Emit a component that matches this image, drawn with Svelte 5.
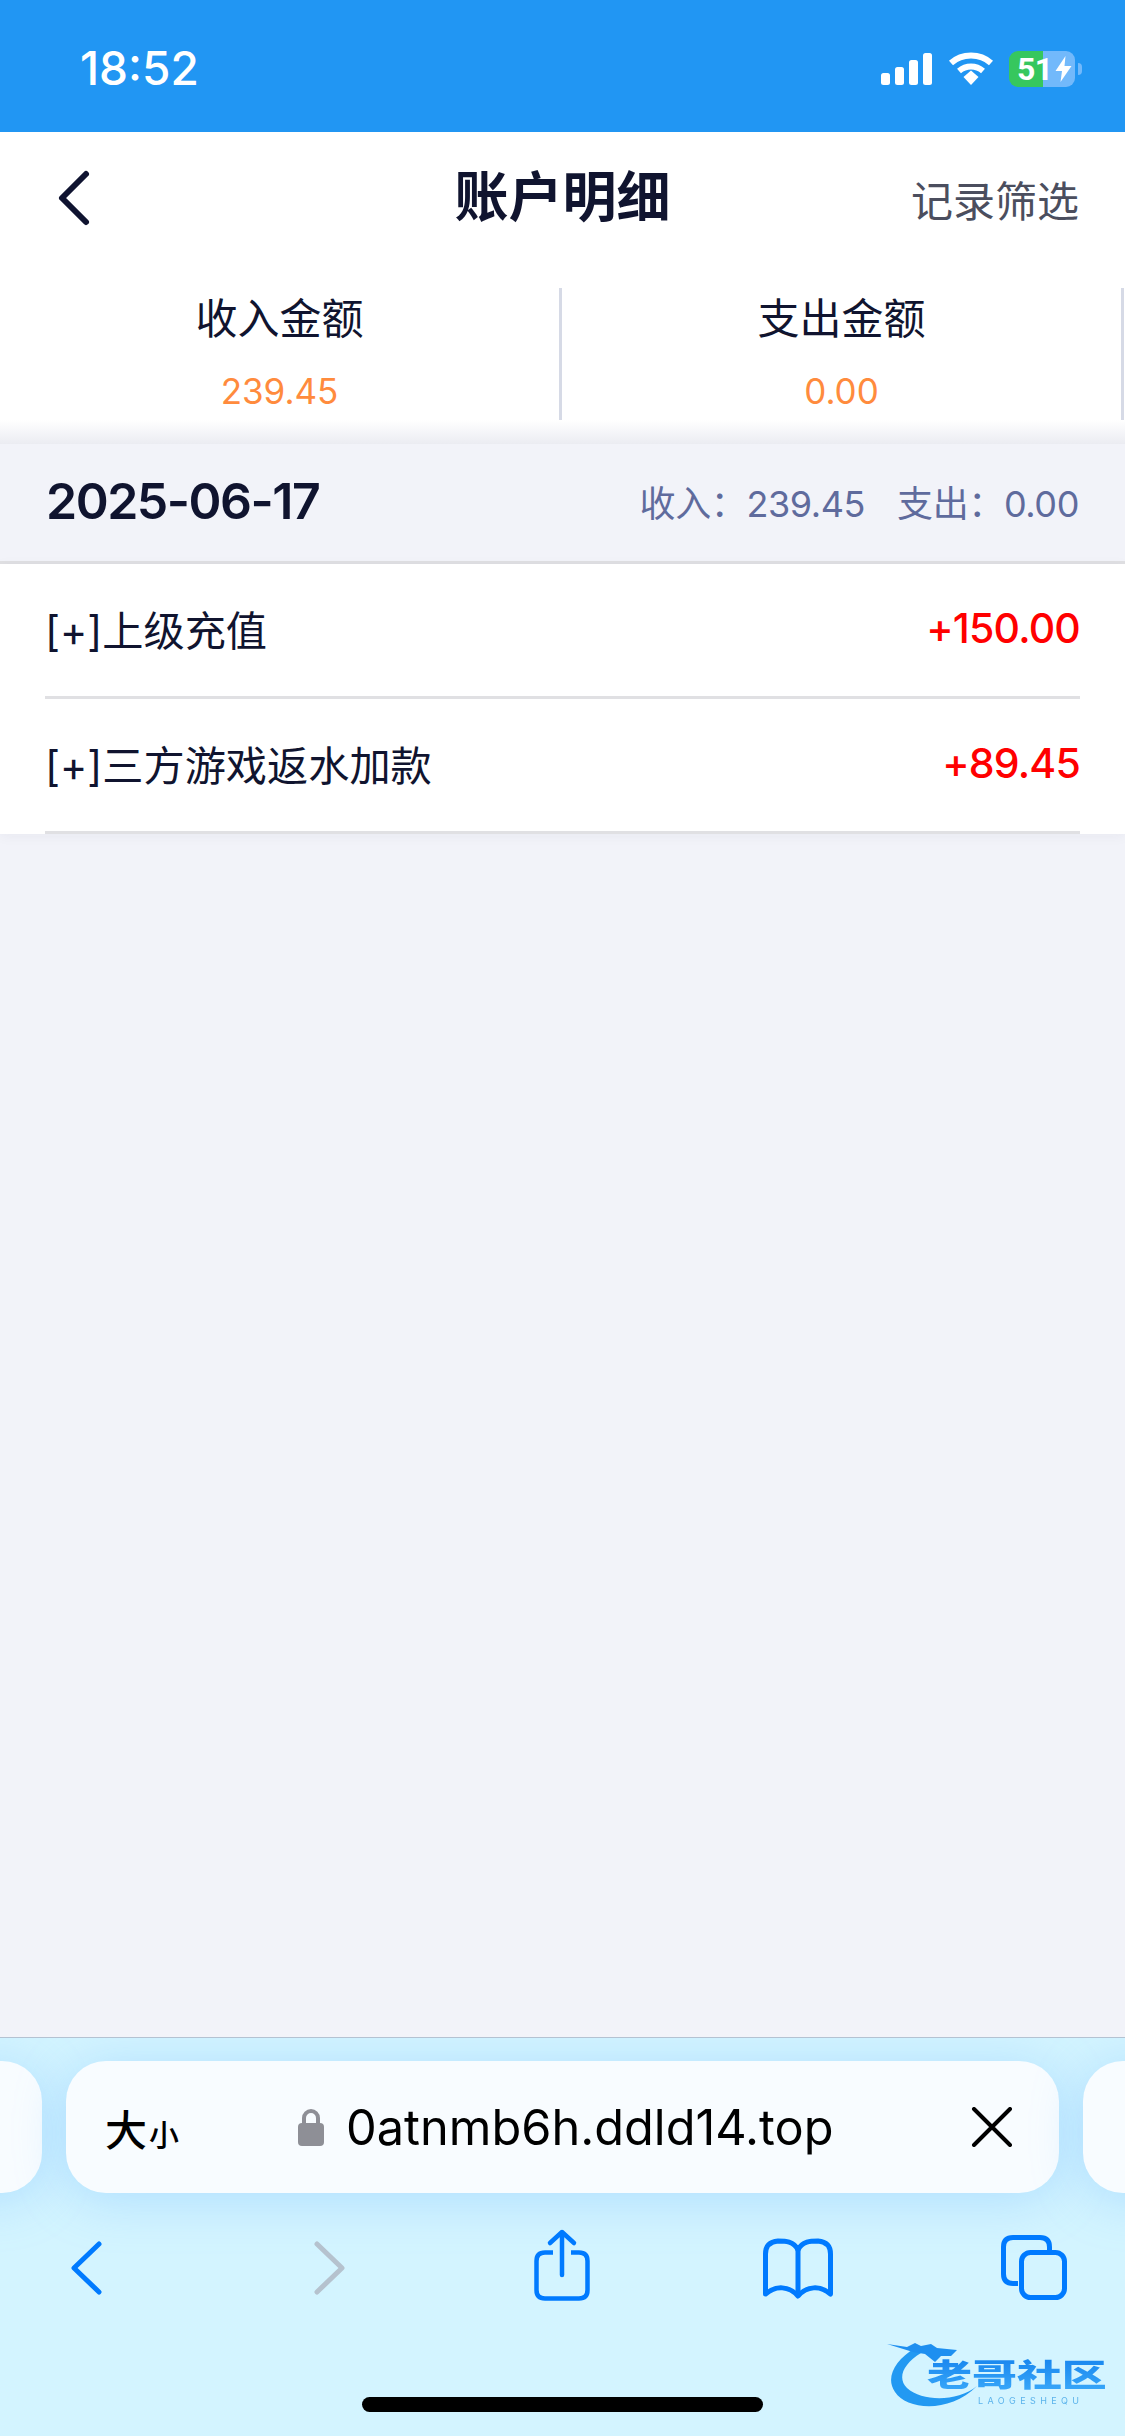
<script>
  const summary = [
    { label: "收入金额", value: "239.45" },
    { label: "支出金额", value: "0.00" },
  ];
  const records = [
    { name: "[+]上级充值", amount: "+150.00" },
    { name: "[+]三方游戏返水加款", amount: "+89.45" },
  ];
</script>

<div class="page">
  <header class="status">
    <span class="time">18:52</span>
    <div class="status-icons">
      <svg class="signal" width="52" height="32" viewBox="0 0 52 32" fill="#fff">
        <rect x="0" y="20" width="9" height="12" rx="2.5" />
        <rect x="14" y="14" width="9" height="18" rx="2.5" />
        <rect x="28" y="7" width="9" height="25" rx="2.5" />
        <rect x="42" y="0" width="9" height="32" rx="2.5" />
      </svg>
      <svg class="wifi" width="46" height="34" viewBox="0 0 46 34" fill="none" stroke="#fff" stroke-width="6">
        <path d="M3 11 C14 1 32 1 43 11" />
        <path d="M11 19 C18 13 28 13 35 19" />
        <path d="M15.500 25 L23 18.500 L30.500 25 L23 33 Z" fill="#fff" stroke="none" />
      </svg>
      <div class="battery">
        <div class="battery-body">
          <span class="battery-level">51</span>
          <svg class="bolt" width="17" height="26" viewBox="0 0 16 26" fill="#fff"><path d="M10 0 L0 15 H6.500 L5 26 L16 10 H9 Z" /></svg>
        </div>
        <div class="battery-nub"></div>
      </div>
    </div>
  </header>

  <nav class="nav">
    <svg class="nav-back" width="36" height="58" viewBox="0 0 36 58" fill="none" stroke="#0f1330" stroke-width="6" stroke-linecap="round" stroke-linejoin="round">
      <path d="M30 5 L6 29 L30 53" />
    </svg>
    <h1>账户明细</h1>
    <span class="filter">记录筛选</span>
  </nav>

  <section class="summary">
    {#each summary as item}
      <div class="summary-col">
        <div class="summary-label">{item.label}</div>
        <div class="summary-value">{item.value}</div>
      </div>
    {/each}
  </section>

  <main class="content">
    <div class="date-row">
      <span class="date">2025-06-17</span>
      <span class="totals">
        <span>收入：239.45</span>
        <span>支出：0.00</span>
      </span>
    </div>
    <ul class="records">
      {#each records as rec}
        <li>
          <div class="record-inner">
            <span>{rec.name}</span>
            <span class="amount">{rec.amount}</span>
          </div>
        </li>
      {/each}
    </ul>
  </main>

  <footer class="safari">
    <div class="pills">
      <div class="pill side left"></div>
      <div class="pill url">
        <span class="aa">大<small>小</small></span>
        <div class="address">
          <svg width="28" height="38" viewBox="0 0 28 38">
            <path d="M7 17 V10 a7 7 0 0 1 14 0 V17" fill="none" stroke="#8e8f96" stroke-width="4" />
            <rect x="1" y="15" width="26" height="23" rx="4" fill="#8e8f96" />
          </svg>
          <span>0atnmb6h.ddld14.top</span>
        </div>
        <svg class="close" width="42" height="40" viewBox="0 0 42 40" stroke="#000" stroke-width="4" stroke-linecap="round">
          <path d="M3 2 L39 38 M39 2 L3 38" />
        </svg>
      </div>
      <div class="pill side right"></div>
    </div>

    <div class="tools">
      <svg width="80" height="76" viewBox="0 0 80 76" fill="none" stroke="#007aff" stroke-width="5" stroke-linecap="round" stroke-linejoin="round">
        <path d="M53 16 L28 40 L53 64" />
      </svg>
      <svg width="80" height="76" viewBox="0 0 80 76" fill="none" stroke="#b5c2ce" stroke-width="5" stroke-linecap="round" stroke-linejoin="round">
        <path d="M27 16 L52 40 L27 64" />
      </svg>
      <svg width="80" height="76" viewBox="0 0 80 76" fill="none" stroke="#007aff" stroke-width="4.500" stroke-linecap="round" stroke-linejoin="round">
        <path d="M31 24.500 H23 Q14.500 24.500 14.500 33 V62 Q14.500 70.500 23 70.500 H57 Q65.500 70.500 65.500 62 V33 Q65.500 24.500 57 24.500 H49" stroke-linecap="butt" />
        <path d="M40 47 V4 M28 15 L40 4 L52 15" />
      </svg>
      <svg width="80" height="76" viewBox="0 0 80 76" fill="none" stroke="#007aff" stroke-width="5" stroke-linecap="round" stroke-linejoin="round">
        <path d="M40 22 C36 13 27 13 20 13 Q7.500 14 7.500 26 V66 C18 57 31 58 40 68 C49 58 62 57 72.500 66 V26 Q72.500 14 60 13 C53 13 44 13 40 22 Z" />
        <path d="M40 22 V66" />
      </svg>
      <svg width="80" height="76" viewBox="0 0 80 76" fill="none" stroke="#007aff" stroke-width="5" stroke-linejoin="round">
        <path d="M23 55.500 H18 Q8.500 55.500 8.500 46 V19 Q8.500 9.500 18 9.500 H45 Q54.500 9.500 54.500 19 V24" />
        <rect x="26.500" y="24.500" width="43" height="45" rx="9" />
      </svg>
    </div>

    <div class="home-bar"></div>

    <div class="watermark">
      <svg width="104" height="78" viewBox="0 0 104 78">
        <path d="M28 12 C8 24 -2 42 8 56 C20 74 62 78 90 50 C70 66 36 66 20 52 C10 42 16 28 34 17 Z" fill="#2299f2" />
        <path d="M0 8 L20 11 L28 7 L34 10 L44 8 L50 12 L70 14 L64 20 L54 20 L48 26 L38 18 L26 16 Z" fill="#1e8ff0" />
      </svg>
      <span class="wm-title">老哥社区</span>
      <span class="wm-sub">LAOGESHEQU</span>
    </div>
  </footer>
</div>

<style>
  :global(body) {
    margin: 0;
    background: #f2f3f9;
  }

  .page {
    width: 1125px;
    height: 2436px;
    display: flex;
    flex-direction: column;
    font-family: Inter, "Noto Sans CJK SC", sans-serif;
    color: #10142f;
    overflow: hidden;
  }

  .status {
    height: 132px;
    flex: none;
    background: #2196f3;
    display: flex;
    justify-content: space-between;
    align-items: flex-start;
    padding: 40px 43px 0 80px;
    box-sizing: border-box;
    color: #fff;
  }

  .time {
    font-size: 46px;
    line-height: 56px;
    font-weight: 500;
  }

  .status-icons {
    display: flex;
    align-items: center;
    gap: 15px;
    margin-top: 11px;
  }

  .battery {
    display: flex;
    align-items: center;
    gap: 3px;
  }

  .battery-body {
    width: 66px;
    height: 36px;
    border-radius: 9px;
    background: linear-gradient(90deg, #36c75e 0 34px, #72b9fb 34px);
    display: flex;
    align-items: center;
    padding-left: 8px;
    box-sizing: border-box;
    color: #fff;
    gap: 2px;
  }

  .battery-level {
    font-family: Roboto, sans-serif;
    font-size: 32px;
    line-height: 36px;
    font-weight: 700;
    letter-spacing: -0.5px;
  }

  .bolt {
    flex: none;
  }

  .battery-nub {
    width: 4px;
    height: 12px;
    border-radius: 0 4px 4px 0;
    background: #72b9fb;
  }

  .nav {
    height: 130px;
    flex: none;
    background: #fff;
    display: grid;
    grid-template-columns: 1fr auto 1fr;
    align-items: center;
    padding: 2px 46px 0;
    box-sizing: border-box;
  }

  .nav-back {
    margin-left: 10px;
  }

  .nav h1 {
    margin: 0;
    font-size: 54px;
    font-weight: 700;
    line-height: 70px;
  }

  .filter {
    justify-self: end;
    font-size: 42px;
    color: #4b4e5e;
  }

  .summary {
    height: 158px;
    flex: none;
    background: #fff;
    display: grid;
    grid-template-columns: 562px 562px;
    padding-top: 26px;
    box-sizing: border-box;
  }

  .summary-col {
    height: 132px;
    border-right: 3px solid #d6dae6;
    text-align: center;
    width: 559px;
  }

  .summary-label {
    font-size: 42px;
    line-height: 60px;
    margin-top: 1px;
  }

  .summary-value {
    font-size: 35px;
    line-height: 44px;
    margin-top: 20px;
    color: #ff8b3d;
  }

  .content {
    flex: 1;
    padding-top: 24px;
    background: linear-gradient(#fff, #ebecf2 24px, #f2f3f9 24px);
  }

  .date-row {
    height: 114px;
    padding: 0 46px 3px;
    display: flex;
    justify-content: space-between;
    align-items: center;
    border-bottom: 3px solid #e0e0e3;
  }

  .date {
    font-size: 50px;
    font-weight: 600;
    letter-spacing: -1.5px;
  }

  .totals {
    display: flex;
    gap: 32px;
    font-size: 36px;
    letter-spacing: -0.4px;
    color: #5f6b9d;
  }

  .records {
    list-style: none;
    margin: 0;
    padding: 0;
    background: #fff;
    box-shadow: 0 2px 12px rgba(30, 40, 80, 0.05);
  }

  .record-inner {
    height: 127px;
    padding-bottom: 5px;
    margin: 0 45px;
    border-bottom: 3px solid #e0e0e3;
    display: flex;
    justify-content: space-between;
    align-items: center;
    font-size: 41.2px;
  }

  .amount {
    color: #ff0000;
    font-size: 41px;
    font-weight: 500;
    letter-spacing: -0.8px;
  }

  .safari {
    height: 399px;
    flex: none;
    position: relative;
    box-sizing: border-box;
    border-top: 1px solid #b4c2d2;
    background: #d3f4ff;
    overflow: hidden;
  }

  .pills {
    display: flex;
    gap: 24px;
    margin: 23px 0 0 -58px;
    width: 1300px;
  }

  .pill {
    height: 132px;
    border-radius: 40px;
    background: #f8fcff;
    box-shadow: 0 6px 50px rgba(120, 190, 255, 0.4);
    flex: none;
  }

  .side {
    width: 100px;
  }

  .url {
    width: 993px;
    display: flex;
    align-items: center;
    padding: 0 46px 0 39px;
    box-sizing: border-box;
    color: #000;
  }

  .aa {
    font-size: 42px;
    font-weight: 500;
    width: 192px;
    flex: none;
  }

  .aa small {
    font-size: 30px;
    font-weight: 500;
    margin-left: 2px;
  }

  .address {
    display: flex;
    align-items: center;
    gap: 21px;
    font-size: 48.7px;
  }

  .close {
    margin-left: auto;
  }

  .tools {
    display: grid;
    grid-template-columns: 244px 232px 236px 237px 80px;
    padding-left: 46px;
    margin-top: 35px;
  }

  .home-bar {
    position: absolute;
    left: 362px;
    bottom: 24px;
    width: 401px;
    height: 15px;
    border-radius: 8px;
    background: #000;
  }

  .watermark {
    position: absolute;
    left: 887px;
    top: 298px;
    width: 220px;
    height: 78px;
    filter: blur(0.7px);
  }

  .watermark svg {
    position: absolute;
    left: 0;
    top: 0;
  }

  .wm-title {
    position: absolute;
    left: 40px;
    top: 19px;
    font-size: 31px;
    line-height: 40px;
    font-weight: 900;
    white-space: nowrap;
    transform: scaleX(1.45);
    transform-origin: left center;
    background: linear-gradient(180deg, #1583ee, #3cabfa);
    -webkit-background-clip: text;
    background-clip: text;
    color: transparent;
  }

  .wm-sub {
    position: absolute;
    left: 91px;
    top: 59px;
    font-size: 9px;
    line-height: 11px;
    letter-spacing: 4.4px;
    color: #5cb4ec;
    white-space: nowrap;
  }
</style>
